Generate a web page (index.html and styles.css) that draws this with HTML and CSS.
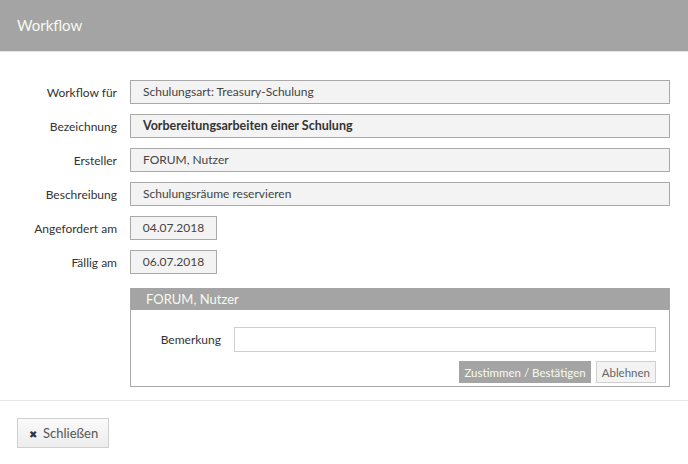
FILE: index.html
```html
<!doctype html>
<html lang="de">
<head>
    <meta charset="UTF-8">
    <title>Workflow</title>
    <link rel="stylesheet" href="styles.css">
</head>
<body>
<div class="dialog">
    <div class="dialog-header">Workflow</div>
    <div class="dialog-body">
        <div class="form-row">
            <label>Workflow für</label>
            <div class="field">Schulungsart: Treasury-Schulung</div>
        </div>
        <div class="form-row">
            <label>Bezeichnung</label>
            <div class="field bold">Vorbereitungsarbeiten einer Schulung</div>
        </div>
        <div class="form-row">
            <label>Ersteller</label>
            <div class="field">FORUM, Nutzer</div>
        </div>
        <div class="form-row">
            <label>Beschreibung</label>
            <div class="field">Schulungsräume reservieren</div>
        </div>
        <div class="form-row">
            <label>Angefordert am</label>
            <div class="field date">04.07.2018</div>
        </div>
        <div class="form-row">
            <label>Fällig am</label>
            <div class="field date">06.07.2018</div>
        </div>

        <div class="approval">
            <div class="approval-header">FORUM, Nutzer</div>
            <div class="approval-body">
                <div class="remark-row">
                    <label for="remark">Bemerkung</label>
                    <input type="text" id="remark">
                </div>
                <div class="approval-actions">
                    <button class="btn btn-primary">Zustimmen / Bestätigen</button>
                    <button class="btn">Ablehnen</button>
                </div>
            </div>
        </div>
    </div>
    <div class="dialog-footer">
        <button class="btn btn-close"><span class="icon">&#10006;</span>Schließen</button>
    </div>
</div>
</body>
</html>
```

FILE: styles.css
```css
body {
    font-family: Lato, "Noto Sans", sans-serif;
    font-size: 12px;
    color: #333;
    margin: 0;
    padding: 0;
    background: #fff;
}

.dialog-header {
    height: 51px;
    line-height: 51px;
    padding-left: 17px;
    background: #a4a4a4;
    color: #f5faee;
    font-size: 15px;
    border-bottom: 1px solid #e4e4e4;
}

.dialog-body {
    padding: 28px 18px 13px 0;
    border-bottom: 1px solid #e6e6e6;
}

.form-row {
    display: flex;
    align-items: center;
    margin-bottom: 10px;
}

.form-row label {
    width: 117px;
    padding-right: 13px;
    text-align: right;
    color: #333;
}

.field {
    flex: 1;
    box-sizing: border-box;
    height: 24px;
    line-height: 22px;
    padding: 0 12px;
    background: #f3f3f3;
    border: 1px solid #a9a9a9;
    color: #444;
}

.field.bold {
    font-weight: bold;
    font-size: 12.5px;
    color: #333;
}

.field.date {
    flex: none;
    width: 87px;
    padding: 0;
    text-align: center;
}

.approval {
    margin: 14px 0 0 130px;
    border: 1px solid #a9a9a9;
    border-top: none;
}

.approval-header {
    height: 22px;
    line-height: 22px;
    padding-left: 15px;
    background: #a4a4a4;
    color: #f5faee;
    font-size: 13px;
}

.approval-body {
    padding: 17px 13px 3px 0;
}

.remark-row {
    display: flex;
    align-items: center;
}

.remark-row label {
    width: 90px;
    padding-right: 13px;
    text-align: right;
}

.remark-row input {
    flex: 1;
    box-sizing: border-box;
    height: 25px;
    border: 1px solid #cfcfcf;
    margin: 0;
}

.approval-actions {
    display: flex;
    justify-content: flex-end;
    gap: 5px;
    margin-top: 9px;
}

.btn {
    font-family: inherit;
    font-size: 11.5px;
    height: 22px;
    padding: 0 5px;
    background: #f3f3f3;
    border: 1px solid #cfcfcf;
    color: #666;
    cursor: pointer;
}

.btn-primary {
    padding: 0 4px;
    background: #a4a4a4;
    border-color: #a4a4a4;
    color: #f5faee;
}

.dialog-footer {
    padding: 17px 17px;
}

.btn-close {
    height: 30px;
    padding: 0 10px 0 11px;
    border: 1px solid #cfcfcf;
    background: linear-gradient(#fafafa, #ececec);
    color: #555;
    font-size: 13px;
}

.btn-close .icon {
    font-size: 10px;
    margin-right: 6px;
    color: #333;
}
```
